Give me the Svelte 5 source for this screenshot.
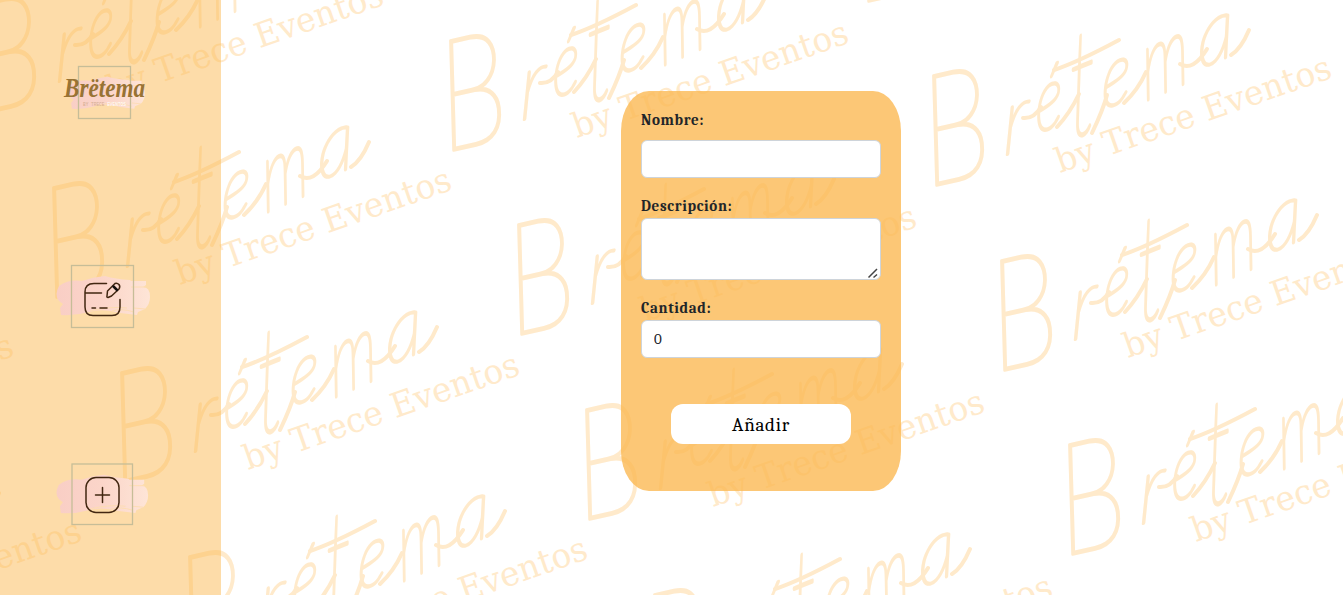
<script>
  let name = $state('');
  let description = $state('');
  let amount = $state(0);

  const marks = [
    [-68, -184], [0, 0], [68, 185], [136, 369],
    [-483, -35], [-415, 149], [-347, 334], [-279, 519],
    [-948, -73], [-880, 112], [-812, 297], [-744, 481],
    [-1318, 278], [-1250, 463]
  ];

  // Each glyph: character, then the matrix that places it on the rising baseline.
  const glyphs = [
    ['B', '1.36 -0.3 0.22 1.78 928 187'],
    ['r', '0.95 -0.35 0 1.08 1003 156'],
    ['é', '0.68 -0.28 0.02 1.02 1036 134'],
    ['t', '0.9 -0.36 0.05 1.7 1071 139'],
    ['e', '0.72 -0.3 0 1 1102 110'],
    ['m', '0.68 -0.3 0.1 1.15 1145 101'],
    ['a', '0.85 -0.36 0.05 1 1199 69']
  ];
</script>

<svg class="watermark" viewBox="0 0 1343 595" aria-hidden="true">
  {#each marks as [x, y]}
    <g transform="translate({x} {y})">
      {#each glyphs as [char, matrix]}
        <text class="script" transform="matrix({matrix})">{char}</text>
      {/each}
      <path class="flourish" d="M1054 70Q1078 62 1119 40M1023 118Q1034 119 1041 107M1057 127Q1070 113 1079 94M1092 133Q1103 110 1107 95M1124 103Q1138 90 1146 72M1180 64Q1193 72 1207 49M1231 55Q1241 49 1249 30" />
      <text class="slab" transform="translate(1060 173) rotate(-19.3)" textLength="290" lengthAdjust="spacingAndGlyphs">by Trece Eventos</text>
    </g>
  {/each}
</svg>

{#snippet brush()}
  <path class="brush" d="M4 17 Q-1 26 4 32 L8 35 L5 39 L6 46 Q20 47 34 43 Q48 39 65 44 L82 46 L83 43 L90 40 Q95 35 95 28 Q95 18 88 18 L91 16 L91 12 L76 12 L75 11 Q60 10 50 7 Q38 8 27 12 Q14 10 4 17Z" />
  <path class="streak" d="M35 42 Q54 37 72 39 M57 42 Q66 39 79 43 M76 18 L91 18 M79 39 L90 40" />
{/snippet}

<div class="page">
  <nav>
    <a class="logo" href="#home" aria-label="Brétema">
      <svg width="84" height="56" viewBox="0 0 84 56">
        <defs>
          <linearGradient id="pink"><stop offset="0" stop-color="#f9cec5" /><stop offset=".5" stop-color="#fbd5c9" /><stop offset="1" stop-color="#fee5d7" /></linearGradient>
        </defs>
        <g transform="translate(4 6) scale(.82)">{@render brush()}</g>
        <rect class="frame" x="15.500" y="1.500" width="52" height="52" />
        <text class="name" x="1" y="32" textLength="81" lengthAdjust="spacingAndGlyphs">Brëtema</text>
        <text class="sub" x="20" y="41" textLength="43" lengthAdjust="spacingAndGlyphs">BY TRECE <tspan>EVENTOS</tspan></text>
      </svg>
    </a>
    <a href="#edit" aria-label="Editar">
      <svg width="96" height="64" viewBox="0 0 96 64">
        <g transform="translate(0 5)">{@render brush()}</g>
        <rect class="frame" x="16.500" y="1.500" width="62" height="62" />
        <g class="icon">
          <path d="M51.500 19.500H39Q30 19.500 30 28V43Q30 51.500 38 51.500H57Q65 51.500 65 43V35.500M30 29H46.500M37 44H40.500M45 44H52" />
          <path d="M52 32L52.500 27L60 19.500Q62 18.500 64 20.500Q65.500 22.500 64 25L56.500 32L53 33.500Q51.500 33.500 52 32Z" />
          <path class="bold" d="M58.500 22.500L62 26" />
        </g>
      </svg>
    </a>
    <a href="#add" aria-label="Añadir">
      <svg width="96" height="64" viewBox="0 0 96 64">
        <g transform="translate(0 6) scale(.98)">{@render brush()}</g>
        <rect class="frame" x="17" y="2" width="60.500" height="60.500" />
        <g class="icon">
          <rect x="31" y="15.500" width="33" height="35" rx="10" />
          <path d="M47.500 25.500V40.500M40.500 33H54.500" />
        </g>
      </svg>
    </a>
  </nav>

  <main>
    <form onsubmit={(event) => event.preventDefault()}>
      <label class="first" for="name">Nombre:</label>
      <input id="name" type="text" bind:value={name} />
      <label for="description">Descripción:</label>
      <div class="area">
        <textarea id="description" rows="2" bind:value={description}></textarea>
        <svg class="grip" width="12" height="12" viewBox="0 0 12 12"><path d="M1.500 10.500L10 2M6.500 10.500L10 7.500" /></svg>
      </div>
      <label for="amount">Cantidad:</label>
      <input id="amount" type="number" bind:value={amount} />
      <button>Añadir</button>
    </form>
  </main>
</div>

<style>
  :global(body) { margin: 0; background: #fff; overflow: hidden; }
  * { box-sizing: border-box; }
  .watermark { position: absolute; inset: 0; width: 1343px; height: 595px; fill: #ffeacb; }
  .script { font: italic 100 86px Lato, sans-serif; stroke: #ffeacb; stroke-width: 2.9; stroke-linejoin: round; vector-effect: non-scaling-stroke; }
  .flourish { fill: none; stroke: #ffeacb; stroke-width: 4; stroke-linecap: round; }
  .slab { font: 34px "DejaVu Serif", serif; }
  .page { position: relative; display: flex; width: 1343px; height: 595px; }
  nav { width: 221px; height: 595px; padding: 64px 16px 0 0; background: rgba(251, 185, 84, .5); display: flex; flex-direction: column; align-items: center; }
  nav a { display: block; height: 64px; margin-bottom: 134px; }
  nav .logo { height: 56px; margin: 1px 0 143px 5px; }
  nav svg { display: block; overflow: visible; }
  .brush { fill: url(#pink); }
  .streak { fill: none; stroke: #fddcb2; stroke-width: 1; }
  .frame { fill: none; stroke: #c6bd98; stroke-width: 1.300; }
  .name { font: italic 700 27px "Liberation Serif", serif; fill: #987334; }
  .sub { font: 5px "Liberation Mono", monospace; fill: #d5ad91; }
  .sub tspan { fill: #fff; }
  .icon { fill: none; stroke: #422711; stroke-width: 1.500; stroke-linecap: round; stroke-linejoin: round; }
  .bold { stroke-width: 2.500; stroke: #16110d; }
  main { flex: 1; padding: 91px 0 0 400px; }
  form { width: 280px; height: 400px; padding: 17px 20px 0; border-radius: 10%; background: rgba(251, 185, 84, .8); display: flex; flex-direction: column; }
  label { height: 24px; font: 700 15px/25px Cambria, Caladea, serif; letter-spacing: .65px; color: #212529; margin-top: 16px; }
  label.first { margin: 0 0 8px; }
  input, textarea { width: 240px; height: 38px; flex: none; padding: 6px 12px; margin: 0; border: 1px solid #ced4da; border-radius: 6px; background: #fff; font: 15px/24px Cambria, Caladea, serif; color: #212529; outline: 0; }
  .area { position: relative; height: 62px; }
  textarea { display: block; height: 62px; resize: none; }
  .grip { position: absolute; right: 2px; bottom: 1px; fill: none; stroke: #454545; stroke-width: 1.500; }
  button { width: 180px; height: 40px; margin: 46px auto 0; padding: 1px 0 0; border: 0; border-radius: 12px; background: #fff; font: 19px Cambria, Caladea, serif; letter-spacing: .7px; color: #000; }
</style>
